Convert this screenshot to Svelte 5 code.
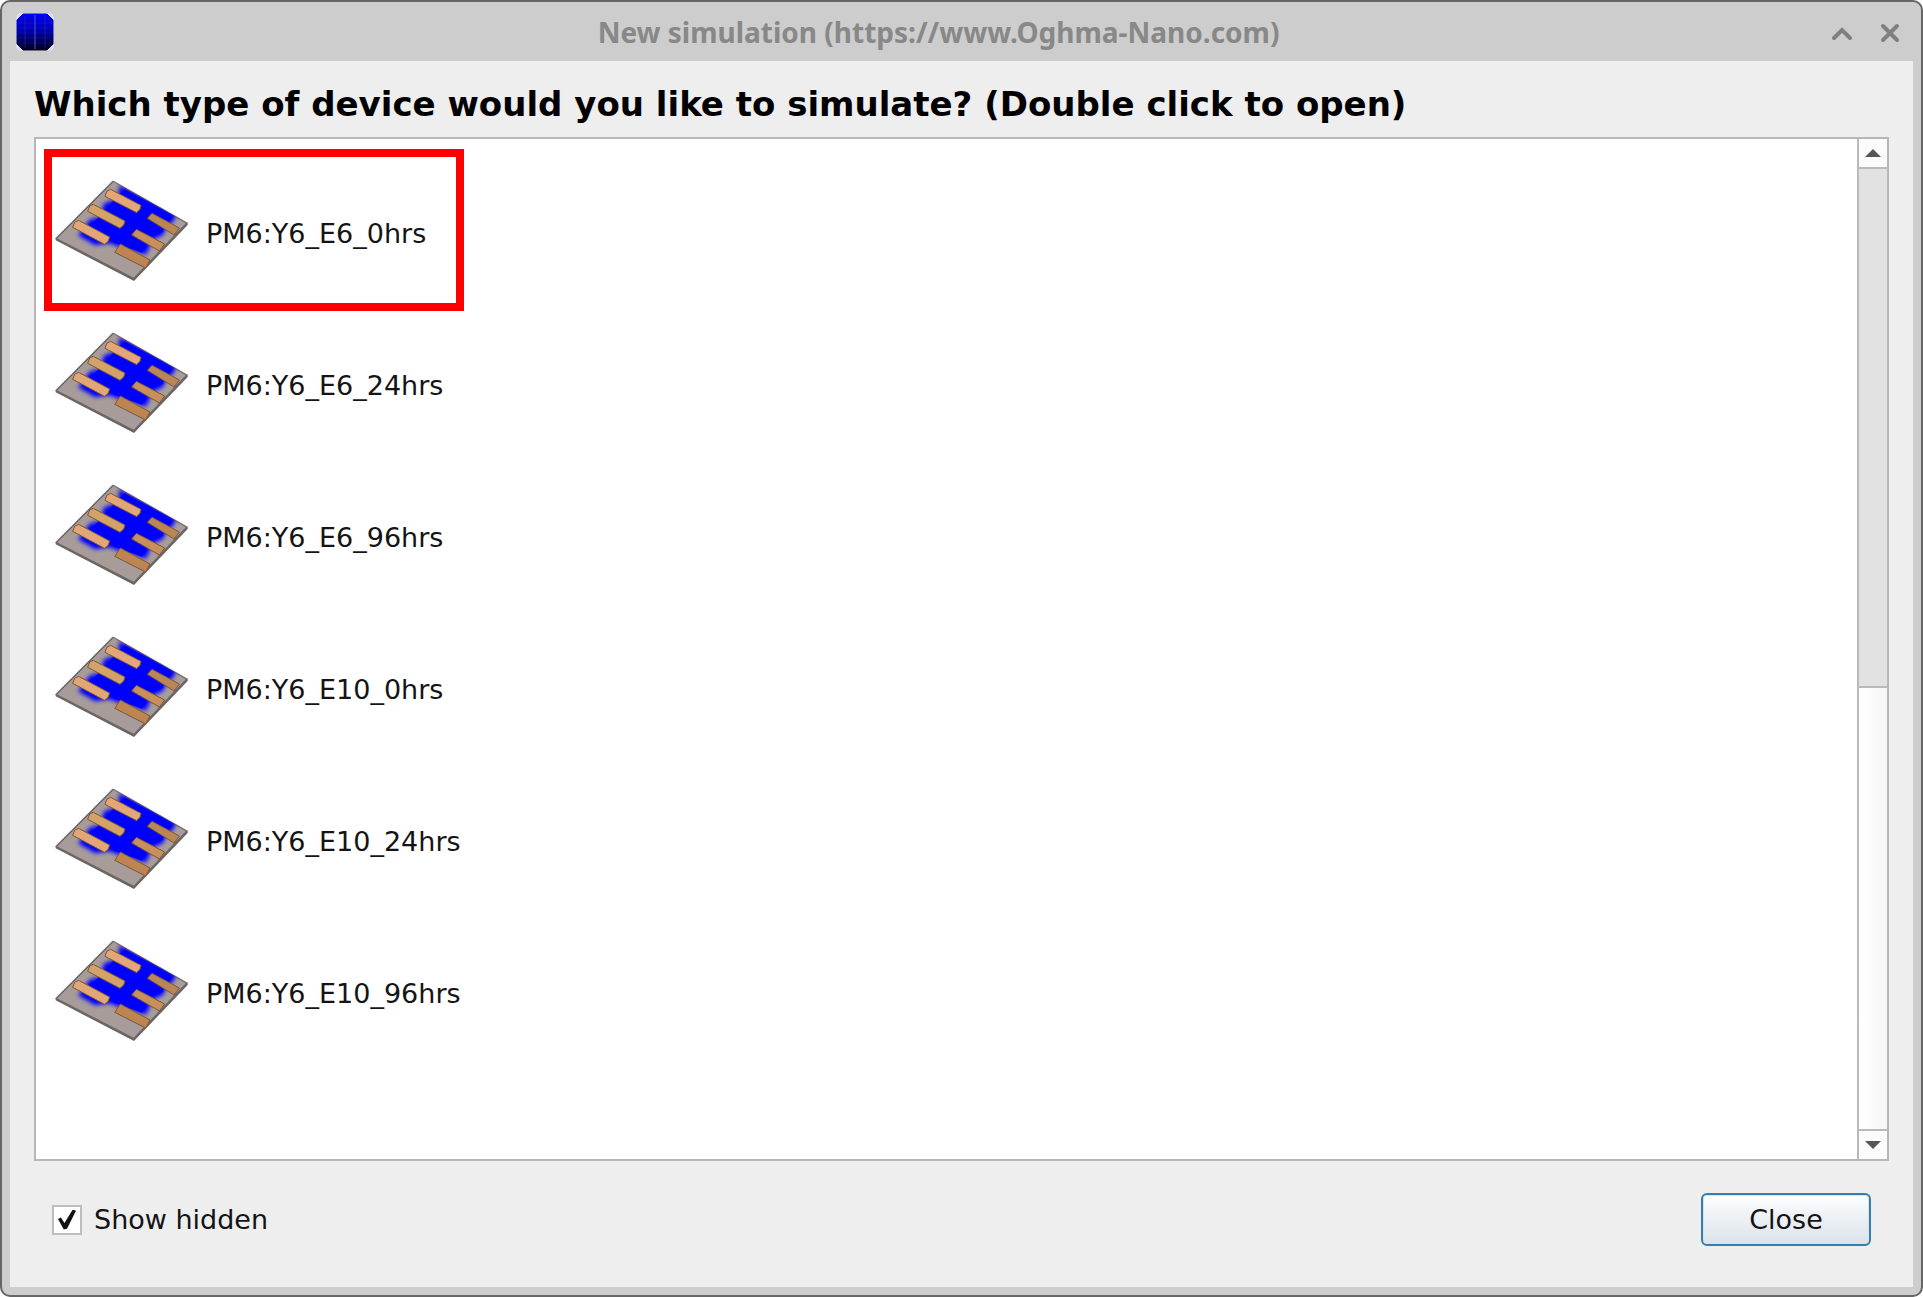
<script>
  const devices = [
    'PM6:Y6_E6_0hrs',
    'PM6:Y6_E6_24hrs',
    'PM6:Y6_E6_96hrs',
    'PM6:Y6_E10_0hrs',
    'PM6:Y6_E10_24hrs',
    'PM6:Y6_E10_96hrs',
  ];
  let selected = $state(0);
  let showHidden = $state(true);
</script>

{#snippet deviceIcon(id)}
  <svg class="device-icon" viewBox="12 25 408 330" aria-hidden="true">
    <defs>
      <filter id="soft-{id}" x="-10%" y="-10%" width="120%" height="120%">
        <feGaussianBlur stdDeviation="6" />
      </filter>
      <clipPath id="plate-{id}"><path d="M190 31 L413 157 L252 324 L17 205 Z" /></clipPath>
    </defs>
    <path d="M190 31 L413 157 L413 163 L252 331 L17 209 L17 204 Z" fill="#6b6563" />
    <path d="M190 33 L408 157 L251 321 L21 203 Z" fill="#a89c9a" />
    <g clip-path="url(#plate-{id})">
      <path
        d="M208 44 L380 130 L370 152 L348 170 L340 192 L308 207 L288 252 L250 240 L200 226 L178 218 L135 224 L84 194 L120 146 L150 140 L162 98 L204 84 Z"
        fill="#0000fe" filter="url(#soft-{id})"
      />
      <path d="M224 56 L368 134 L336 185 L304 197 L276 246 L190 214 L124 164 L176 105 Z" fill="#0000fe" />
    </g>
    <path d="M190 31 L17 205" fill="none" stroke="#6a6462" stroke-width="4" />
    <path d="M190 31 L413 158" fill="none" stroke="#6a6462" stroke-width="4" opacity="0.5" />
    <g stroke="#7a5636" stroke-width="3" stroke-linejoin="round">
      <path d="M165 77 L171 61 L182 56 L273 104 L270 116 L260 126 Z" fill="#e3a676" />
      <path d="M113 122 L119 106 L130 101 L225 151 L221 163 L210 173 Z" fill="#d2a266" />
      <path d="M68 170 L74 155 L86 149 L179 199 L175 211 L164 221 Z" fill="#e3a676" />
      <path d="M306 128 L388 172 L372 193 L292 143 Z" fill="#ba8656" />
      <path d="M259 176 L344 220 L328 241 L245 193 Z" fill="#c88f5c" />
      <path d="M211 220 L300 268 L287 292 L194 245 Z" fill="#bd8552" />
    </g>
  </svg>
{/snippet}

<div class="window">
  <header class="titlebar">
    <svg class="app-icon" viewBox="0 0 38 38" aria-hidden="true">
      <defs>
        <linearGradient id="app-fill" x1="0" y1="0" x2="0" y2="1">
          <stop offset="0" stop-color="#0000f4" />
          <stop offset="0.45" stop-color="#0000b0" />
          <stop offset="1" stop-color="#000018" />
        </linearGradient>
      </defs>
      <rect width="38" height="38" rx="5" fill="#dcdff0" />
      <path d="M7 1 H31 L37 7 V31 L31 37 H7 L1 31 V7 Z" fill="url(#app-fill)" stroke="url(#app-fill)" stroke-width="1" stroke-linejoin="round" />
      <path d="M19 2 V36" stroke="#5555c8" stroke-width="1" />
      <path d="M9 3 V35 M29 3 V35" stroke="#3c3cc8" stroke-width="1" opacity="0.4" />
      <path d="M2 10 H36 M2 15 H36 M2 20 H36 M2 25 H36 M2 30 H36" stroke="#4040d0" stroke-width="1" opacity="0.2" />
    </svg>
    <h1 class="title">New simulation (https://www.Oghma-Nano.com)</h1>
    <div class="controls">
      <button class="control" aria-label="Roll up">
        <svg viewBox="0 0 22 22"><path d="M3 16 L11 8 L19 16" /></svg>
      </button>
      <button class="control" aria-label="Close window">
        <svg viewBox="0 0 22 22"><path d="M4 4 L18 18 M18 4 L4 18" /></svg>
      </button>
    </div>
  </header>

  <main class="content">
    <h2 class="question">Which type of device would you like to simulate? (Double click to open)</h2>

    <div class="list-frame">
      <ul class="devices">
        {#each devices as name, i}
          <li>
            <button class="device" class:selected={selected === i} onclick={() => (selected = i)}>
              {@render deviceIcon(i)}
              <span>{name}</span>
            </button>
          </li>
        {/each}
      </ul>
      <div class="scrollbar">
        <button class="arrow" aria-label="Scroll up">
          <svg viewBox="0 0 16 8"><path d="M0 8 L8 0 L16 8 Z" /></svg>
        </button>
        <div class="track"></div>
        <div class="thumb"></div>
        <button class="arrow" aria-label="Scroll down">
          <svg viewBox="0 0 16 8"><path d="M0 0 L8 8 L16 0 Z" /></svg>
        </button>
      </div>
    </div>

    <footer class="actions">
      <label class="hidden-toggle">
        <input type="checkbox" bind:checked={showHidden} />
        <span>Show hidden</span>
      </label>
      <button class="close">Close</button>
    </footer>
  </main>
</div>

<style>
  :global(body) {
    margin: 0;
    background: #fff;
  }
  * {
    box-sizing: border-box;
  }
  button {
    font: inherit;
    color: inherit;
    margin: 0;
    padding: 0;
    border: 0;
    background: none;
  }
  .window {
    min-height: 100vh;
    display: flex;
    flex-direction: column;
    padding: 0 8px 8px;
    border: 2px solid #666;
    border-radius: 10px;
    background: #cdcdcd;
    color: #141414;
    font: 27px/32px "DejaVu Sans", sans-serif;
  }
  .titlebar {
    display: grid;
    grid-template-columns: 60px 1fr 100px;
    align-items: center;
    height: 59px;
    padding: 0 12px 0 6px;
  }
  .app-icon {
    width: 38px;
    height: 38px;
  }
  .title {
    margin: 0;
    text-align: center;
    font: bold 28px/32px "Noto Sans", sans-serif;
    color: #888;
  }
  .controls {
    display: flex;
    justify-content: flex-end;
    gap: 26px;
    padding-top: 2px;
  }
  .control {
    display: flex;
  }
  .control svg {
    width: 22px;
    height: 22px;
    fill: none;
    stroke: #808080;
    stroke-width: 4;
    stroke-linecap: round;
  }
  .content {
    flex: 1;
    display: flex;
    flex-direction: column;
    padding: 23px 24px 41px;
    background: #eee;
  }
  .question {
    margin: 0 0 13px;
    font-size: 34px;
    line-height: 40px;
    color: #000;
  }
  .list-frame {
    flex: 1;
    display: flex;
    border: 2px solid #b7b7b7;
    background: #fff;
  }
  .devices {
    flex: 1;
    margin: 0;
    padding: 10px 8px;
    list-style: none;
  }
  .devices li {
    display: flex;
    height: 152px;
  }
  .devices li:first-child {
    height: 162px;
    margin-bottom: -5px;
  }
  .device {
    display: flex;
    align-items: center;
    gap: 16px;
    padding: 8px 0 0 10px;
    min-width: 420px;
    text-align: left;
  }
  .device.selected {
    border: 8px solid #f00;
    padding-left: 2px;
  }
  .device-icon {
    width: 136px;
    height: 110px;
  }
  .scrollbar {
    display: flex;
    flex-direction: column;
    width: 30px;
    border-left: 2px solid #bababa;
  }
  .arrow {
    display: flex;
    align-items: center;
    justify-content: center;
    height: 28px;
    background: #fbfbfb;
  }
  .arrow svg {
    width: 16px;
    height: 8px;
    fill: #555;
  }
  .track {
    flex: 54;
    border: solid #bababa;
    border-width: 2px 0;
    background: #e2e2e2;
  }
  .thumb {
    flex: 46;
    border-bottom: 2px solid #bababa;
    background: linear-gradient(90deg, #fff, #f6f6f6);
  }
  .actions {
    display: flex;
    align-items: center;
    justify-content: space-between;
    padding: 32px 18px 0;
  }
  .hidden-toggle {
    display: flex;
    align-items: center;
    gap: 12px;
  }
  .hidden-toggle input {
    appearance: none;
    display: grid;
    place-items: center;
    width: 30px;
    height: 30px;
    margin: 0;
    border: 2px solid #bdbdbd;
    background: #fff;
  }
  .hidden-toggle input:checked::before {
    content: "";
    width: 18px;
    height: 20px;
    background: #111;
    clip-path: polygon(0 48%, 16% 40%, 36% 68%, 82% 0, 100% 6%, 50% 96%, 32% 100%);
  }
  .close {
    width: 170px;
    height: 53px;
    border: 2px solid #397ea8;
    border-radius: 6px;
    background: linear-gradient(#fdfefe, #dbe2ea);
    box-shadow: inset 0 0 0 1px #cfe6f2;
  }
</style>
